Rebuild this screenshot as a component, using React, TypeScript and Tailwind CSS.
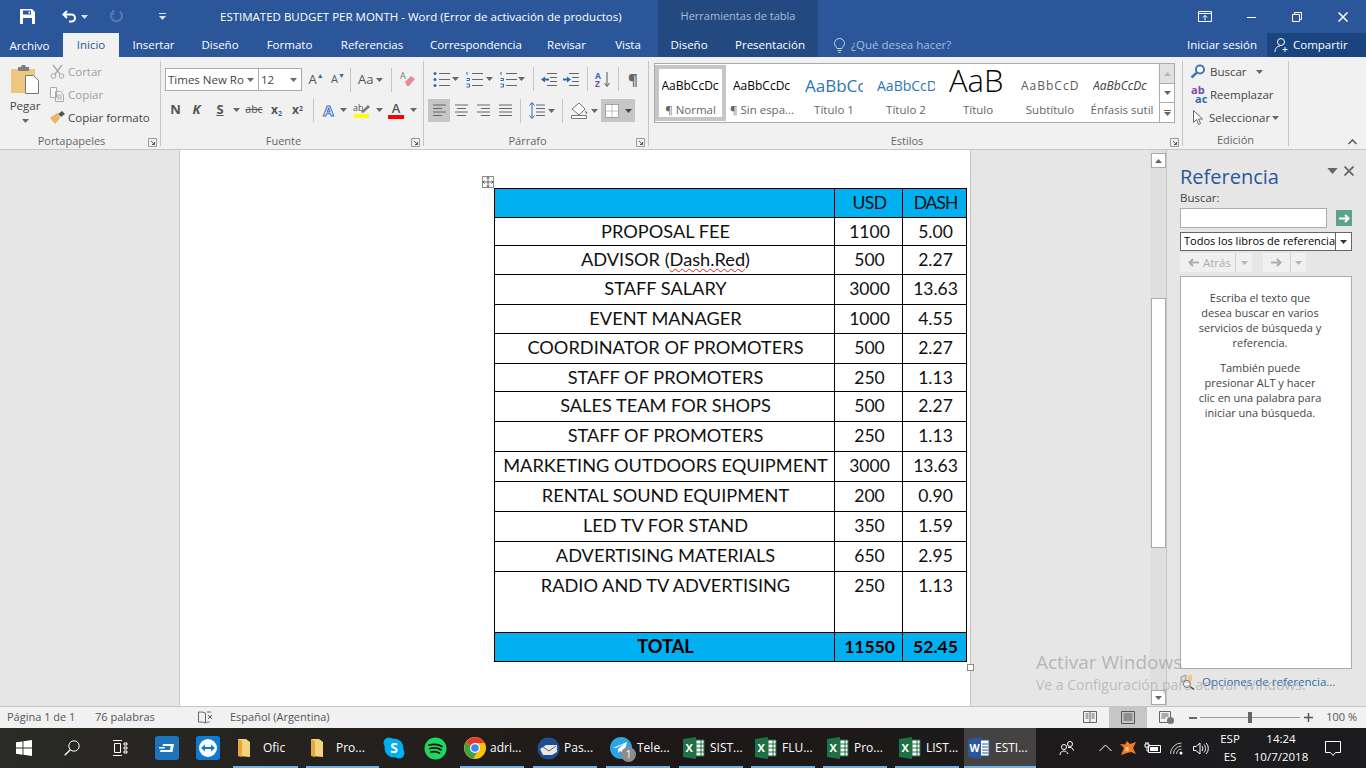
import React from 'react';

const ui = { fontFamily: '"Open Sans", "Noto Sans", sans-serif' };

const Caret = ({ className = 'text-[#666]' }: { className?: string }) => (
  <svg width="7" height="4" viewBox="0 0 7 4" className={`shrink-0 ${className}`}>
    <path d="M0 0h7L3.500 4z" fill="currentColor" />
  </svg>
);

const Launcher = () => (
  <svg width="9" height="9" viewBox="0 0 9 9" className="shrink-0">
    <path d="M.5.500h8v8h-8z" fill="none" stroke="#9a9a9a" />
    <path d="M3 3l3.500 3.500M6.500 4v2.500H4" fill="none" stroke="#555" />
  </svg>
);

const Sep = ({ h = 'h-[24px]' }: { h?: string }) => <div className={`w-px ${h} bg-[#c6c6c6] shrink-0`} />;

const Lines = ({ kind }: { kind: 'left' | 'center' | 'right' | 'justify' }) => {
  const rows =
    kind === 'left'
      ? ['M2 2h13', 'M2 5.500h9', 'M2 9h13', 'M2 12.500h9']
      : kind === 'center'
        ? ['M2 2h13', 'M4 5.500h9', 'M2 9h13', 'M4 12.500h9']
        : kind === 'right'
          ? ['M2 2h13', 'M6 5.500h9', 'M2 9h13', 'M6 12.500h9']
          : ['M2 2h13', 'M2 5.500h13', 'M2 9h13', 'M2 12.500h13'];
  return (
    <svg width="17" height="15" viewBox="0 0 17 15">
      {rows.map((d) => (
        <path key={d} d={d} stroke="#666" strokeWidth="1" fill="none" />
      ))}
    </svg>
  );
};

const BulletIcon = ({ kind }: { kind: 'bullet' | 'number' | 'multi' }) => (
  <svg width="19" height="17" viewBox="0 0 19 17" className="shrink-0">
    <path d="M7 2.500h11M7 8.500h11M7 14.500h11" stroke="#666" fill="none" />
    {kind === 'bullet' && (
      <g fill="#2b6cb0">
        <circle cx="3" cy="2.500" r="1.500" />
        <circle cx="3" cy="8.500" r="1.500" />
        <circle cx="3" cy="14.500" r="1.500" />
      </g>
    )}
    {kind !== 'bullet' && <path d="M2 1v3M1.500 7.500h3v2h-3M1.500 13h3v3h-3" stroke="#2b6cb0" fill="none" />}
  </svg>
);

function QuickBar() {
  return (
    <div className="h-[33px] bg-[#2b579a] flex items-center text-white relative">
      <div className="w-[54px] flex justify-center pl-[1px]">
        <svg width="15" height="15" viewBox="0 0 15 15">
          <path d="M0 0h12l3 3v12H0z" fill="#fff" />
          <path d="M3 1.500h8v4H3zM3 9h9v6H3z" fill="#2b579a" />
          <path d="M8.500 2.500h1.500v2H8.500z" fill="#fff" />
        </svg>
      </div>
      <div className="w-[36px] flex items-center justify-between pl-[8px] pr-[2px]">
        <svg width="16" height="14" viewBox="0 0 16 14">
          <path d="M5 1L1.500 4.500 5 8M2 4.500h7.500a3.500 3.500 0 0 1 3.500 3.500v0a3.500 3.500 0 0 1-3.500 3.500H7" fill="none" stroke="#fff" strokeWidth="2" />
        </svg>
        <Caret className="text-[#dbe4f2]" />
      </div>
      <div className="w-[46px] flex justify-center pl-[7px]">
        <svg width="15" height="15" viewBox="0 0 15 15">
          <path d="M4 2.500a5.500 5.500 0 1 0 7 0M4 1v4H1" fill="none" stroke="#5579ae" strokeWidth="2" />
        </svg>
      </div>
      <div className="w-[44px] flex justify-center pl-[8px]">
        <svg width="7" height="7" viewBox="0 0 7 7">
          <path d="M0 0h7v1H0zM0 3h7L3.500 7z" fill="#dbe4f2" />
        </svg>
      </div>
      <div className="w-[40px]" />
      <div className="text-[11.500px] whitespace-nowrap pt-[1px]">ESTIMATED BUDGET PER MONTH - Word (Error de activación de productos)</div>
      <div className="absolute left-[658px] top-0 w-[160px] h-[33px] bg-[#234a80] flex items-center justify-center text-[11px] text-[#a9bcd8]">
        Herramientas de tabla
      </div>
      <div className="absolute right-0 top-0 h-[33px] flex items-center">
        <div className="w-[46px] flex justify-center">
          <svg width="14" height="11" viewBox="0 0 14 11">
            <path d="M.5.500h13v10H.5zM1 2.500h12M7 9.500V4.500M4.800 6.500 7 4.300l2.200 2.200" fill="none" stroke="#fff" />
          </svg>
        </div>
        <div className="w-[46px] flex justify-center">
          <div className="w-[9px] h-[1px] bg-white mt-[2px] border-b border-white" />
        </div>
        <div className="w-[46px] flex justify-center">
          <svg width="10" height="10" viewBox="0 0 10 10">
            <path d="M.5 2.500h7v7h-7zM2.500 2.500v-2h7v7h-2" fill="none" stroke="#fff" />
          </svg>
        </div>
        <div className="w-[46px] flex justify-center">
          <svg width="10" height="10" viewBox="0 0 10 10">
            <path d="M.5.500l9 9M9.500.500l-9 9" stroke="#fff" strokeWidth="1.500" />
          </svg>
        </div>
      </div>
    </div>
  );
}

const tabs = [
  { label: 'Insertar', w: 'w-[69px]' },
  { label: 'Diseño', w: 'w-[64px]' },
  { label: 'Formato', w: 'w-[75px]' },
  { label: 'Referencias', w: 'w-[90px]' },
  { label: 'Correspondencia', w: 'w-[118px]' },
  { label: 'Revisar', w: 'w-[63px]' },
  { label: 'Vista', w: 'w-[60px]' },
];

function TabBar() {
  return (
    <div className="h-[24px] bg-[#2b579a] flex items-stretch text-[11.500px] text-white">
      <div className="w-[63px] flex items-center justify-center pt-[2px] pr-[4px]">Archivo</div>
      <div className="w-[56px] bg-[#f1f1f1] text-[#2b579a] flex items-center justify-center">Inicio</div>
      {tabs.map((t) => (
        <div key={t.label} className={`${t.w} flex items-center justify-center`}>
          {t.label}
        </div>
      ))}
      <div className="w-[160px] bg-[#234a80] flex items-center">
        <div className="w-[62px] text-center">Diseño</div>
        <div className="w-[98px] text-center pl-[2px]">Presentación</div>
      </div>
      <div className="flex items-center pl-[15px] text-[#a9bcd8]">
        <svg width="13" height="15" viewBox="0 0 13 15" className="mr-[5px]">
          <path d="M4 10.500C3.500 8.500 1.500 8 1.500 5.500a5 5 0 0 1 10 0C11.500 8 9.500 8.500 9 10.500zM4.500 12.500h4M5.500 14.500h2" fill="none" stroke="#c5d2e6" />
        </svg>
        ¿Qué desea hacer?
      </div>
      <div className="flex-1" />
      <div className="flex items-center pr-[10px]">Iniciar sesión</div>
      <div className="w-[99px] bg-[#1a4480] flex items-center pl-[7px] gap-[3px]">
        <svg width="16" height="16" viewBox="0 0 16 16">
          <circle cx="7" cy="5" r="3.500" fill="none" stroke="#fff" />
          <path d="M1 15c0-4 2.500-6 5-6M11 10v5M8.500 12.500h5" fill="none" stroke="#fff" />
        </svg>
        Compartir
      </div>
    </div>
  );
}

function RibbonGroup({ w, label, launcher = true, children }: { w: string; label: string; launcher?: boolean; children: React.ReactNode }) {
  return (
    <div className={`${w} h-[85px] shrink-0 relative border-r border-[#c6c6c6]`}>
      <div className="h-[72px]">{children}</div>
      <div className={`h-[15px] text-[11px] text-[#666] text-center leading-[15px] ${launcher ? 'pr-[17px]' : ''}`}>{label}</div>
      {launcher && (
        <div className="absolute right-[3px] bottom-[-1px]">
          <Launcher />
        </div>
      )}
    </div>
  );
}

function Clipboard() {
  return (
    <div className="flex h-full">
      <div className="w-[50px] flex flex-col items-center pt-[4px] text-[11.500px] text-[#444]">
        <svg width="30" height="30" viewBox="0 0 30 30">
          <path d="M1 4h24v24H1z" fill="#efc780" />
          <path d="M8 2h3l1-2h3l1 2h3v4H8z" fill="#7d7d7d" />
          <path d="M15.500 10.500h8l5 5v13h-13z" fill="#fff" stroke="#777" />
        </svg>
        <div className="mt-[3px] leading-[16px]">Pegar</div>
        <div className="mt-[5px]">
          <Caret />
        </div>
      </div>
      <div className="flex flex-col text-[11.500px] -mt-[1px]">
        <div className="h-[23px] flex items-center text-[#a0a0a0] gap-[3px]">
          <svg width="15" height="15" viewBox="0 0 15 15">
            <path d="M3 1l7 9M12 1L5 10" stroke="#a8a8a8" strokeWidth="1.300" fill="none" />
            <circle cx="3.500" cy="12" r="2.300" fill="none" stroke="#a8a8a8" />
            <circle cx="11.500" cy="12" r="2.300" fill="none" stroke="#a8a8a8" />
          </svg>
          Cortar
        </div>
        <div className="h-[23px] flex items-center text-[#a0a0a0] gap-[3px]">
          <svg width="15" height="15" viewBox="0 0 15 15">
            <path d="M.5.500h6v10h-6zM5.500 4.500h5l3 3v7h-8zM7 8h5M7 10h5M7 12h5" fill="#f8f8f8" stroke="#aaa" />
          </svg>
          Copiar
        </div>
        <div className="h-[23px] flex items-center text-[#444] gap-[3px] whitespace-nowrap">
          <svg width="15" height="14" viewBox="0 0 15 14">
            <path d="M0 7l7-5 3 5-5 6z" fill="#e8b765" />
            <path d="M8 3l4-3 3 3-4 3z" fill="#555" />
          </svg>
          Copiar formato
        </div>
      </div>
    </div>
  );
}

function Font() {
  return (
    <div className="flex flex-col h-full pl-[4px]">
      <div className="h-[30px] flex items-end text-[#444]">
        <div className="w-[94px] h-[23px] bg-white border border-[#ababab] flex items-center justify-between pl-[2px] pr-[4px] text-[11.500px] whitespace-nowrap">
          <span>Times New Ro</span>
          <Caret />
        </div>
        <div className="w-[43px] h-[23px] bg-white border border-l-0 border-[#ababab] flex items-center justify-between pl-[2px] pr-[4px] text-[11.500px]">
          <span>12</span>
          <Caret />
        </div>
        <div className="w-[24px] h-[23px] flex items-center justify-center pl-[4px] text-[13px] text-[#555]">
          A<sup className="text-[#2b6cb0] text-[7px]">▲</sup>
        </div>
        <div className="w-[24px] h-[23px] flex items-center justify-center text-[11px] text-[#555]">
          A<sup className="text-[#2b6cb0] text-[7px]">▼</sup>
        </div>
        <div className="h-[23px] flex items-center pr-[7px]"><Sep /></div>
        <div className="w-[33px] h-[23px] flex items-center gap-[3px] text-[13px] text-[#555]">
          Aa
          <Caret />
        </div>
        <div className="h-[23px] flex items-center pr-[8px]"><Sep /></div>
        <div className="h-[23px] flex items-center">
          <svg width="16" height="17" viewBox="0 0 16 17">
            <text x="0" y="8" fontSize="9" fill="#777" fontFamily="Open Sans">A</text>
            <path d="M5 11l6-6 4 3-6 7H7z" fill="#e88a94" />
          </svg>
        </div>
      </div>
      <div className="h-[30px] flex items-center text-[#555] mt-[4px]">
        <div className="w-[19px] text-center text-[13px] font-bold pl-[2px]">N</div>
        <div className="w-[25px] text-center text-[13px] font-bold italic">K</div>
        <div className="w-[22px] text-center text-[13px] font-bold underline">S</div>
        <div className="w-[8px] ml-[1px] flex justify-center"><Caret /></div>
        <div className="w-[28px] text-center text-[10.500px] line-through">abc</div>
        <div className="w-[17px] text-center text-[12px] font-bold">
          x<sub className="text-[#2b6cb0] text-[7px]">2</sub>
        </div>
        <div className="w-[21px] ml-[2px] text-center text-[12px] font-bold">
          x<sup className="text-[7px]">2</sup>
        </div>
        <div className="px-[5px] flex items-center"><Sep /></div>
        <div className="w-[19px] text-center text-[15px] text-white font-bold [-webkit-text-stroke:1px_#3573b8]">A</div>
        <div className="w-[10px] flex justify-center"><Caret /></div>
        <div className="w-[26px] flex justify-center ml-[1px]">
          <svg width="18" height="16" viewBox="0 0 18 16">
            <text x="0" y="9" fontSize="9" fill="#555" fontFamily="Open Sans">ab</text>
            <path d="M8 10l7-7 2 2-7 6z" fill="#777" />
            <path d="M1 12h15v4H1z" fill="#ffff00" />
          </svg>
        </div>
        <div className="w-[8px] flex justify-center"><Caret /></div>
        <div className="w-[26px] flex flex-col items-center">
          <span className="text-[13px] leading-[13px] font-semibold">A</span>
          <span className="w-[16px] h-[4px] bg-[#ff0000]" />
        </div>
        <div className="w-[8px] flex justify-center"><Caret /></div>
      </div>
    </div>
  );
}

function Paragraph() {
  return (
    <div className="flex flex-col h-full pl-[6px]">
      <div className="h-[30px] flex items-end pb-[2px]">
        <div className="h-[20px] flex items-center w-[22px] pl-[2px]"><BulletIcon kind="bullet" /></div>
        <div className="h-[20px] flex items-center w-[8px]"><Caret /></div>
        <div className="h-[20px] flex items-center w-[26px] pl-[5px]"><BulletIcon kind="number" /></div>
        <div className="h-[20px] flex items-center w-[8px]"><Caret /></div>
        <div className="h-[20px] flex items-center w-[24px] pl-[5px]"><BulletIcon kind="multi" /></div>
        <div className="h-[20px] flex items-center w-[8px]"><Caret /></div>
        <div className="h-[20px] flex items-center px-[7px]"><Sep /></div>
        <div className="h-[20px] flex items-center gap-[5px]">
          <svg width="17" height="13" viewBox="0 0 17 13">
            <path d="M6 .500h10M9 4.500h7M9 8.500h7M6 12.500h10" stroke="#666" fill="none" />
            <path d="M0 6.500l4-3v2h4v2H4v2z" fill="#2b6cb0" />
          </svg>
          <svg width="17" height="13" viewBox="0 0 17 13">
            <path d="M6 .500h10M9 4.500h7M9 8.500h7M6 12.500h10" stroke="#666" fill="none" />
            <path d="M8 6.500l-4-3v2H0v2h4v2z" fill="#2b6cb0" />
          </svg>
        </div>
        <div className="h-[20px] flex items-center px-[7px]"><Sep /></div>
        <div className="h-[20px] flex items-center">
          <svg width="16" height="17" viewBox="0 0 16 17">
            <text x="0" y="8" fontSize="8.500" fontWeight="700" fill="#2b6cb0" fontFamily="Open Sans">A</text>
            <text x="0" y="16" fontSize="8.500" fontWeight="700" fill="#7b4fa3" fontFamily="Open Sans">Z</text>
            <path d="M12 1v14M9.500 12l2.500 3.500 2.500-3.500" stroke="#555" fill="none" />
          </svg>
        </div>
        <div className="h-[20px] flex items-center px-[7px]"><Sep /></div>
        <div className="h-[20px] w-[14px] flex items-center justify-center text-[15px] font-bold text-[#666]">¶</div>
      </div>
      <div className="h-[23px] flex items-center mt-[8px] -ml-[2px]">
        <div className="w-[22px] h-[23px] bg-[#c6c6c6] flex items-center justify-center"><Lines kind="left" /></div>
        <div className="w-[22px] flex justify-center"><Lines kind="center" /></div>
        <div className="w-[22px] flex justify-center"><Lines kind="right" /></div>
        <div className="w-[22px] flex justify-center"><Lines kind="justify" /></div>
        <div className="px-[4px] flex items-center"><Sep /></div>
        <div className="flex items-center gap-[3px] w-[29px] ml-[4px]">
          <svg width="16" height="17" viewBox="0 0 16 17" className="shrink-0">
            <path d="M3 1v15M.5 3.500L3 .500l2.500 3M.5 13.500L3 16.500l2.500-3" stroke="#2b6cb0" fill="none" />
            <path d="M7 3h9M7 6.500h9M7 10h9M7 13.500h9" stroke="#666" fill="none" />
          </svg>
          <Caret />
        </div>
        <div className="px-[4px] flex items-center"><Sep /></div>
        <div className="flex items-center gap-[1px] w-[28px] ml-[3px]">
          <svg width="20" height="17" viewBox="0 0 20 17" className="shrink-0">
            <path d="M2 7l7-6 6 6-6 6z" fill="#fff" stroke="#777" />
            <path d="M15 8l2.500 3-1.500 1z" fill="#2b6cb0" />
            <path d="M1.500 13.500h15v3h-15z" fill="#fff" stroke="#777" />
          </svg>
          <Caret />
        </div>
        <div className="w-[34px] h-[23px] bg-[#c6c6c6] flex items-center justify-center gap-[6px] ml-[3px]">
          <svg width="14" height="14" viewBox="0 0 14 14">
            <path d="M.5.500h13v13H.5z" fill="#fff" stroke="#666" strokeDasharray="1 1" />
            <path d="M7 .500v13M.5 7h13" fill="none" stroke="#888" strokeDasharray="1 1" />
          </svg>
          <Caret className="text-[#444]" />
        </div>
      </div>
    </div>
  );
}

const styles = [
  { name: '¶ Normal', w: 'w-[71px]', sample: 'AaBbCcDc', cls: 'text-[12px] text-black', active: true },
  { name: '¶ Sin espa...', w: 'w-[72px]', sample: 'AaBbCcDc', cls: 'text-[12px] text-black' },
  { name: 'Título 1', w: 'w-[72px]', sample: 'AaBbCc', cls: 'text-[17px] text-[#2e74b5]' },
  { name: 'Título 2', w: 'w-[72px]', sample: 'AaBbCcD', cls: 'text-[14px] text-[#2e74b5]' },
  { name: 'Título', w: 'w-[72px]', sample: 'AaB', cls: 'text-[31px] font-light text-black leading-[26px] pb-[12px]' },
  { name: 'Subtítulo', w: 'w-[72px]', sample: 'AaBbCcD', cls: 'text-[12px] text-[#5a5a5a] tracking-[1px]' },
  { name: 'Énfasis sutil', w: 'w-[72px]', sample: 'AaBbCcDc', cls: 'text-[12px] italic text-[#404040]' },
];

function Styles() {
  return (
    <div className="flex pl-[5px] pt-[2px]">
      <div className="w-[521px] h-[60px] bg-white border border-[#ababab] flex">
        <div className="flex-1 flex min-w-0">
          {styles.map((s) => (
            <div
              key={s.name}
              className={`${s.w} shrink-0 h-[56px] mt-[1px] flex flex-col items-center overflow-hidden border-[4px] ${s.active ? 'border-[#c6c6c6]' : 'border-white'}`}
            >
              <div className={`h-[33px] shrink-0 w-[64px] flex items-center justify-center overflow-hidden whitespace-nowrap ${s.cls}`}>
                <span className="inline-block w-[58px] overflow-hidden text-clip">{s.sample}</span>
              </div>
              <div className="text-[11.500px] text-[#666] leading-[15px] whitespace-nowrap">{s.name}</div>
            </div>
          ))}
        </div>
        <div className="w-[15px] shrink-0 border-l border-[#ababab] flex flex-col">
          <div className="h-[20px] bg-[#e1e1e1] border-b border-[#ababab] flex items-center justify-center">
            <Caret className="text-[#b5b5b5] rotate-180" />
          </div>
          <div className="h-[19px] border-b border-[#ababab] flex items-center justify-center">
            <Caret />
          </div>
          <div className="flex-1 flex flex-col items-center justify-center gap-[1px]">
            <div className="w-[7px] h-px bg-[#666]" />
            <Caret />
          </div>
        </div>
      </div>
    </div>
  );
}

function Editing() {
  return (
    <div className="flex flex-col pl-[7px] text-[11.500px] text-[#444] -mt-[1px]">
      <div className="h-[23px] flex items-center gap-[4px]">
        <svg width="16" height="15" viewBox="0 0 16 15">
          <circle cx="10" cy="5.500" r="4" fill="#fff" stroke="#3f78b5" strokeWidth="2" />
          <path d="M7 8.500L1.500 13.500" stroke="#3f78b5" strokeWidth="2.500" />
        </svg>
        Buscar
        <Caret className="text-[#666] ml-[5px]" />
      </div>
      <div className="h-[23px] flex items-center gap-[3px]">
        <div className="w-[17px] h-[19px] text-[11px] leading-[9px] font-bold">
          <div className="text-[#7b4fa3] pl-[1px]">ab</div>
          <div className="text-[#2b6cb0] pl-[5px]">ac</div>
        </div>
        Reemplazar
      </div>
      <div className="h-[23px] flex items-center gap-[5px] pl-[3px]">
        <svg width="11" height="16" viewBox="0 0 11 16">
          <path d="M.5.500v12l3-3 2 5 2-1-2-4.500h4z" fill="#fff" stroke="#666" />
        </svg>
        <span className="flex items-center gap-[2px]">
          Seleccionar
          <Caret />
        </span>
      </div>
    </div>
  );
}

function Ribbon() {
  return (
    <div className="h-[93px] bg-[#f1f1f1] border-b border-[#c6c6c6] flex pt-[4px] relative" style={ui}>
      <RibbonGroup w="w-[161px]" label="Portapapeles">
        <Clipboard />
      </RibbonGroup>
      <RibbonGroup w="w-[263px]" label="Fuente">
        <Font />
      </RibbonGroup>
      <RibbonGroup w="w-[225px]" label="Párrafo">
        <Paragraph />
      </RibbonGroup>
      <RibbonGroup w="w-[534px]" label="Estilos">
        <Styles />
      </RibbonGroup>
      <RibbonGroup w="w-[106px]" label="Edición" launcher={false}>
        <Editing />
      </RibbonGroup>
      <div className="absolute right-[9px] bottom-[4px]">
        <svg width="9" height="6" viewBox="0 0 9 6">
          <path d="M.5 5l4-4 4 4" fill="none" stroke="#555" strokeWidth="1.500" />
        </svg>
      </div>
    </div>
  );
}

const rows: { name: string; usd: string; dash: string; h: string; squiggle?: boolean }[] = [
  { name: 'PROPOSAL FEE', usd: '1100', dash: '5.00', h: 'h-[28px]' },
  { name: 'ADVISOR (Dash.Red)', usd: '500', dash: '2.27', h: 'h-[29px]', squiggle: true },
  { name: 'STAFF SALARY', usd: '3000', dash: '13.63', h: 'h-[30px]' },
  { name: 'EVENT MANAGER', usd: '1000', dash: '4.55', h: 'h-[29px]' },
  { name: 'COORDINATOR OF PROMOTERS', usd: '500', dash: '2.27', h: 'h-[30px]' },
  { name: 'STAFF OF PROMOTERS', usd: '250', dash: '1.13', h: 'h-[28px]' },
  { name: 'SALES TEAM FOR SHOPS', usd: '500', dash: '2.27', h: 'h-[30px]' },
  { name: 'STAFF OF PROMOTERS', usd: '250', dash: '1.13', h: 'h-[30px]' },
  { name: 'MARKETING OUTDOORS EQUIPMENT', usd: '3000', dash: '13.63', h: 'h-[30px]' },
  { name: 'RENTAL SOUND EQUIPMENT', usd: '200', dash: '0.90', h: 'h-[30px]' },
  { name: 'LED TV FOR STAND', usd: '350', dash: '1.59', h: 'h-[30px]' },
  { name: 'ADVERTISING MATERIALS', usd: '650', dash: '2.95', h: 'h-[30px]' },
  { name: 'RADIO AND TV ADVERTISING', usd: '250', dash: '1.13', h: 'h-[61px]' },
];

const td = 'border border-black p-0 pl-[2px] align-top text-center leading-[27px] whitespace-nowrap';

function BudgetTable() {
  return (
    <div className="relative w-[472px]">
      <div className="absolute -left-[12px] -top-[12px] w-[12px] h-[12px] border border-[#8a8a8a] bg-white flex items-center justify-center">
        <svg width="10" height="10" viewBox="0 0 10 10">
          <path d="M5 0v10M0 5h10M3.500 1.500L5 0l1.500 1.500M3.500 8.500L5 10l1.500-1.500M1.500 3.500L0 5l1.500 1.500M8.500 3.500L10 5 8.500 6.500" fill="none" stroke="#444" strokeWidth=".8" />
        </svg>
      </div>
      <table className="border-collapse table-fixed w-[472px] text-[17.500px] text-[#111]" style={{ fontFamily: 'Lato, sans-serif' }}>
        <colgroup>
          <col className="w-[340px]" />
          <col className="w-[68px]" />
          <col className="w-[64px]" />
        </colgroup>
        <tbody>
          <tr className="h-[29px] bg-[#00b0f0]">
            <td className={td} />
            <td className={`${td} tracking-[-0.5px]`}>USD</td>
            <td className={`${td} tracking-[-1px]`}>DASH</td>
          </tr>
          {rows.map((r, i) => (
            <tr key={i} className={r.h}>
              <td className={`${td} text-[18.200px]`}>
                {r.squiggle ? (
                  <>
                    ADVISOR (<span className="underline decoration-wavy decoration-[#e02020] decoration-1 underline-offset-2">Dash.Red</span>)
                  </>
                ) : (
                  r.name
                )}
              </td>
              <td className={td}>{r.usd}</td>
              <td className={td}>{r.dash}</td>
            </tr>
          ))}
          <tr className="h-[29px] bg-[#00b0f0] font-bold text-black">
            <td className={`${td} text-[18.200px]`}>TOTAL</td>
            <td className={td}>11550</td>
            <td className={td}>52.45</td>
          </tr>
        </tbody>
      </table>
      <div className="absolute -right-[8px] -bottom-[9px] w-[7px] h-[7px] border border-[#8a8a8a] bg-white" />
    </div>
  );
}

function ReferencePane() {
  return (
    <div className="w-[200px] shrink-0 bg-[#e6e6e6] border-l border-[#c6c6c6] flex flex-col pl-[13px] pr-[14px] text-[#444]" style={ui}>
      <div className="h-[41px] flex items-end justify-between">
        <span className="text-[20px] leading-[28px] text-[#2b579a]">Referencia</span>
        <span className="flex items-center gap-[6px] mb-[15px] -mr-[2px]">
          <Caret className="text-[#666] scale-150" />
          <svg width="10" height="10" viewBox="0 0 10 10" className="ml-[2px]">
            <path d="M.5.500l9 9M9.500.500l-9 9" stroke="#666" strokeWidth="1.800" />
          </svg>
        </span>
      </div>
      <div className="text-[11.500px] leading-[16px] mt-[-1px]">Buscar:</div>
      <div className="flex items-center justify-between mt-[2px]">
        <div className="w-[147px] h-[20px] bg-white border border-[#ababab]" />
        <div className="w-[16px] h-[16px] bg-[#5da38a] flex items-center justify-center">
          <svg width="11" height="9" viewBox="0 0 11 9">
            <path d="M0 4.500h9M6 1l3.500 3.500L6 8" fill="none" stroke="#fff" strokeWidth="2" />
          </svg>
        </div>
      </div>
      <div className="h-[19px] mt-[4px] bg-white border border-[#666] flex items-center text-[11px] text-black">
        <span className="flex-1 pl-[3px] whitespace-nowrap overflow-hidden">Todos los libros de referencia</span>
        <span className="w-[16px] h-full border-l border-[#666] flex items-center justify-center">
          <Caret className="text-[#333]" />
        </span>
      </div>
      <div className="flex mt-[2px] gap-[11px] text-[11.500px] text-[#adadad]">
        <div className="w-[72px] h-[19px] bg-[#f0f0f0] flex items-center pl-[8px] gap-[4px]">
          <svg width="11" height="9" viewBox="0 0 11 9">
            <path d="M11 4.500H2M5 1L1.500 4.500 5 8" fill="none" stroke="#adadad" strokeWidth="2" />
          </svg>
          Atrás
          <span className="ml-auto w-[17px] h-full border-l border-[#d0d0d0] flex items-center justify-center">
            <Caret className="text-[#b5b5b5]" />
          </span>
        </div>
        <div className="w-[43px] h-[19px] bg-[#f0f0f0] flex items-center pl-[8px]">
          <svg width="11" height="9" viewBox="0 0 11 9">
            <path d="M0 4.500h9M6 1l3.500 3.500L6 8" fill="none" stroke="#adadad" strokeWidth="2" />
          </svg>
          <span className="ml-auto w-[16px] h-full border-l border-[#d0d0d0] flex items-center justify-center">
            <Caret className="text-[#b5b5b5]" />
          </span>
        </div>
      </div>
      <div className="mt-[4px] h-[393px] bg-white border border-[#ababab] text-[11px] leading-[15px] text-center text-[#444] pl-[16px] pr-[28px] pt-[13px]">
        <p>Escriba el texto que desea buscar en varios servicios de búsqueda y referencia.</p>
        <p className="mt-[10px]">También puede presionar ALT y hacer clic en una palabra para iniciar una búsqueda.</p>
      </div>
      <div className="flex items-center mt-[4px] gap-[6px] text-[11.500px] text-[#2b6cb0] whitespace-nowrap">
        <svg width="16" height="16" viewBox="0 0 16 16">
          <path d="M1 8V3l5-2v5z" fill="#d8d8d8" stroke="#999" />
          <path d="M8 1h4v6H8z" fill="#f2c77e" />
          <circle cx="7" cy="10" r="3.500" fill="#fff" stroke="#666" />
          <path d="M10 12.500l4 3" stroke="#444" strokeWidth="1.500" />
        </svg>
        Opciones de referencia...
      </div>
    </div>
  );
}

function DocArea() {
  return (
    <div className="h-[556px] flex bg-[#e6e6e6] relative overflow-hidden">
      <div className="w-[179px] shrink-0" />
      <div className="w-[792px] shrink-0 bg-white border-x border-[#c6c6c6] pl-[314px] pt-[38px]">
        <BudgetTable />
      </div>
      <div className="w-[179px] shrink-0" />
      <div className="w-[16px] shrink-0 bg-[#dfdfdf] flex flex-col items-center">
        <div className="w-[15px] h-[15px] mt-[3px] bg-white border border-[#ababab] flex items-center justify-center">
          <Caret className="text-[#666] rotate-180" />
        </div>
        <div className="w-[15px] h-[250px] mt-[130px] bg-white border border-[#ababab]" />
        <div className="flex-1" />
        <div className="w-[15px] h-[15px] mb-[1px] bg-white border border-[#ababab] flex items-center justify-center">
          <Caret className="text-[#666]" />
        </div>
      </div>
      <ReferencePane />
      <div className="absolute left-[1036px] top-[500px] text-[#a9a9a9]/80 pointer-events-none whitespace-nowrap" style={ui}>
        <div className="text-[19px] leading-[24px]">Activar Windows</div>
        <div className="text-[14px] leading-[22px] text-[#a9a9a9]/70">Ve a Configuración para activar Windows.</div>
      </div>
    </div>
  );
}

function StatusBar() {
  return (
    <div className="h-[22px] bg-[#f1f1f1] border-t border-[#c6c6c6] flex items-center text-[11px] text-[#555]" style={ui}>
      <span className="pl-[7px] w-[95px]">Página 1 de 1</span>
      <span className="w-[103px]">76 palabras</span>
      <svg width="15" height="13" viewBox="0 0 15 13">
        <path d="M7.500 2C6 1 3 1 .5 1v10c2.500 0 5.500 0 7 1 1.500-1 3-1 4-1M7.500 2v10M9 1h4" fill="none" stroke="#666" />
        <path d="M10 4l4 4M14 4l-4 4" stroke="#555" />
      </svg>
      <span className="pl-[17px]">Español (Argentina)</span>
      <div className="flex-1" />
      <div className="w-[38px] flex justify-center">
        <svg width="14" height="13" viewBox="0 0 14 13">
          <path d="M.5.500h13v11H.5zM7 .500v11M2.500 3h3M2.500 5h3M2.500 7h3M8.500 3h3M8.500 5h3M8.500 7h3" fill="none" stroke="#666" />
        </svg>
      </div>
      <div className="w-[38px] h-full bg-[#c6c6c6] flex justify-center items-center">
        <svg width="14" height="13" viewBox="0 0 14 13">
          <path d="M.5.500h13v12H.5zM2.500 3h9M2.500 5h9M2.500 7h9M2.500 9h9" fill="none" stroke="#555" />
        </svg>
      </div>
      <div className="w-[38px] flex justify-center">
        <svg width="15" height="13" viewBox="0 0 15 13">
          <path d="M.5.500h11v11H.5zM2.500 3h7M2.500 5h7M2.500 7h4" fill="none" stroke="#666" />
          <circle cx="11.500" cy="9.500" r="3.500" fill="#777" />
        </svg>
      </div>
      <div className="w-[4px]" />
      <div className="w-[8px] h-[2px] bg-[#666]" />
      <div className="w-[100px] ml-[3px] mr-[4px] h-px bg-[#999] relative">
        <div className="absolute left-[48px] -top-[5px] w-[4px] h-[11px] bg-[#666]" />
      </div>
      <svg width="9" height="9" viewBox="0 0 9 9">
        <path d="M4.500 0v9M0 4.500h9" stroke="#555" strokeWidth="1.500" />
      </svg>
      <span className="w-[53px] text-right pr-[9px] text-[#555]">100 %</span>
    </div>
  );
}

const Folder = () => (
  <svg width="16" height="20" viewBox="0 0 16 20">
    <path d="M1 1h8l4 3v15l-12-1z" fill="#f5d27c" />
    <path d="M1 1l4 2v16l-4-1z" fill="#e3a93c" />
  </svg>
);

const Excel = () => (
  <svg width="22" height="22" viewBox="0 0 22 22">
    <path d="M10 3h11v16H10z" fill="#fff" stroke="#1e7145" />
    <path d="M13 3v16M18 3v16M13 7h8M13 11h8M13 15h8" stroke="#1e7145" fill="none" />
    <path d="M0 2l13-2v22L0 20z" fill="#1e7145" />
    <text x="2.500" y="15" fontSize="11" fontWeight="700" fill="#fff" fontFamily="Open Sans">X</text>
  </svg>
);

type Task = { icon: React.ReactNode; label?: string; w: string; line?: string; active?: boolean; gap?: string };

const tasks: Task[] = [
  { w: 'w-[41px]', icon: (
    <div className="w-[24px] h-[24px] bg-[#1c75bc] rounded-[3px] flex items-center justify-center">
      <svg width="16" height="8" viewBox="0 0 16 8"><path d="M4 0h11l-1.500 8H1l.5-2h9.500l.7-4H3.500zM0 3h6l-.4 1.500h-6z" fill="#fff" /></svg>
    </div>
  ) },
  { w: 'w-[41px]', icon: (
    <div className="w-[24px] h-[24px] bg-[#0e7ad4] rounded-[3px] flex items-center justify-center">
      <svg width="20" height="20" viewBox="0 0 20 20"><circle cx="10" cy="10" r="9" fill="#fff" /><path d="M3 10l4-3.500V9h6V6.500l4 3.500-4 3.500V11H7v2.500z" fill="#0e7ad4" /></svg>
    </div>
  ) },
  { w: 'w-[73px]', line: 'right-[8px]', label: 'Ofic', icon: <Folder />, gap: 'gap-[10px]' },
  { w: 'w-[73px]', line: 'right-0', label: 'Pro...', icon: <Folder />, gap: 'gap-[10px]' },
  { w: 'w-[41px]', icon: (
    <svg width="22" height="22" viewBox="0 0 22 22">
      <circle cx="6" cy="6" r="5.500" fill="#00aff0" />
      <circle cx="16" cy="16" r="5.500" fill="#00aff0" />
      <circle cx="11" cy="11" r="9.500" fill="#00aff0" />
      <text x="11" y="16" textAnchor="middle" fontSize="14" fontWeight="700" fill="#fff" fontFamily="Open Sans">S</text>
    </svg>
  ) },
  { w: 'w-[40px]', icon: (
    <svg width="23" height="23" viewBox="0 0 23 23">
      <circle cx="11.500" cy="11.500" r="11" fill="#1ed760" />
      <path d="M5 8c4-1 9-1 13 1.500M6 11.500c3.500-1 8-.8 11 1.200M7 15c3-.7 6-.5 8.500 1" fill="none" stroke="#111" strokeWidth="1.800" strokeLinecap="round" />
    </svg>
  ) },
  { w: 'w-[73px]', line: 'right-[9px]', label: 'adri...', gap: 'gap-[4px]', icon: (
    <svg width="22" height="22" viewBox="0 0 22 22">
      <circle cx="11" cy="11" r="11" fill="#ffc107" />
      <path d="M11 11L2 5.500A11 11 0 0 1 21 6H11z" fill="#e53935" />
      <path d="M11 11L2 5.500A11 11 0 0 0 9 22l5-8z" fill="#43a047" />
      <circle cx="11" cy="11" r="5" fill="#fff" />
      <circle cx="11" cy="11" r="3.800" fill="#4285f4" />
    </svg>
  ) },
  { w: 'w-[73px]', line: 'right-[9px]', label: 'Pas...', gap: 'gap-[4px]', icon: (
    <svg width="23" height="23" viewBox="0 0 23 23">
      <circle cx="11.500" cy="11.500" r="11" fill="#1f4f8f" />
      <path d="M3 12l6-4h11v7l-5 3H6z" fill="#e7e7e7" />
      <path d="M6 10l6 4 7-5" fill="none" stroke="#666" />
    </svg>
  ) },
  { w: 'w-[73px]', line: 'right-[9px]', label: 'Tele...', gap: 'gap-[5px]', icon: (
    <div className="relative w-[22px] h-[22px]">
      <svg width="22" height="22" viewBox="0 0 22 22">
        <circle cx="11" cy="11" r="11" fill="#2ca5e0" />
        <path d="M3 11l14-6-3 12-4-3-2 2v-4l6-5-8 4z" fill="#fff" />
      </svg>
      <div className="absolute -right-[4px] -bottom-[3px] w-[15px] h-[15px] rounded-full bg-[#8c8c8c] text-[10px] leading-[15px] text-center text-white">1</div>
    </div>
  ) },
  { w: 'w-[72px]', line: 'right-[8px]', label: 'SIST...', icon: <Excel />, gap: 'gap-[5px]' },
  { w: 'w-[72px]', line: 'right-[8px]', label: 'FLU...', icon: <Excel />, gap: 'gap-[5px]' },
  { w: 'w-[72px]', line: 'right-[8px]', label: 'Pro...', icon: <Excel />, gap: 'gap-[5px]' },
  { w: 'w-[69px]', line: 'right-[5px]', label: 'LIST...', icon: <Excel />, gap: 'gap-[5px]' },
  { w: 'w-[72px]', line: 'right-0', active: true, label: 'ESTI...', gap: 'gap-[5px]', icon: (
    <svg width="22" height="22" viewBox="0 0 22 22">
      <path d="M10 3h11v16H10z" fill="#fff" stroke="#2b579a" />
      <path d="M14 7h6M14 10h6M14 13h6M14 16h6" stroke="#2b579a" />
      <path d="M0 2l13-2v22L0 20z" fill="#2b579a" />
      <text x="1.500" y="15" fontSize="10.500" fontWeight="700" fill="#fff" fontFamily="Open Sans">W</text>
    </svg>
  ) },
];

function Taskbar() {
  return (
    <div className="h-[40px] bg-gradient-to-r from-[#2a2a26] via-[#1d1817] to-[#1c1c1f] flex items-stretch text-white text-[12px]" style={ui}>
      <div className="w-[48px] flex items-center justify-center">
        <svg width="16" height="16" viewBox="0 0 16 16">
          <path d="M0 2.300l6.500-.9v6.200H0zM7.400 1.300L16 0v7.600H7.400zM0 8.500h6.500v6.200L0 13.800zM7.400 8.500H16V16l-8.600-1.200z" fill="#fff" />
        </svg>
      </div>
      <div className="w-[48px] flex items-center justify-center">
        <svg width="16" height="16" viewBox="0 0 16 16">
          <circle cx="10" cy="6" r="5.200" fill="none" stroke="#fff" />
          <path d="M6.300 9.700L.7 15.300" stroke="#fff" strokeWidth="1.300" />
        </svg>
      </div>
      <div className="w-[48px] flex items-center justify-center">
        <svg width="16" height="16" viewBox="0 0 16 16">
          <path d="M1 .500h9M1 15.500h9M2.500 3.500h6v9h-6zM12 3h3v2h-3zM12 7h3v2h-3zM12 11h3v2h-3z" fill="none" stroke="#fff" />
        </svg>
      </div>
      <div className="w-[7px]" />
      {tasks.map((t, i) => (
        <div key={i} className={`${t.w} relative flex items-center pl-[4px] ${t.gap ?? ''} ${t.active ? 'bg-[#454341]' : ''}`}>
          {t.icon}
          {t.label && <span className="whitespace-nowrap">{t.label}</span>}
          {t.line && <div className={`absolute bottom-0 left-0 ${t.line} h-[2px] bg-[#6fb1e8]`} />}
        </div>
      ))}
      <div className="flex-1" />
      <div className="flex items-center w-[330px] shrink-0">
        <div className="w-[62px] flex justify-center">
          <svg width="16" height="16" viewBox="0 0 16 16">
            <circle cx="5" cy="7" r="2.500" fill="none" stroke="#fff" />
            <circle cx="11" cy="4" r="2.500" fill="none" stroke="#fff" />
            <path d="M1 15c0-3 2-4 4-4s3 1 4 3M9 7.500c3-.5 5 .5 5.500 3" fill="none" stroke="#fff" />
          </svg>
        </div>
        <div className="w-[14px] flex justify-center">
          <svg width="13" height="8" viewBox="0 0 13 8" className="shrink-0">
            <path d="M.5 7l6-6 6 6" fill="none" stroke="#fff" />
          </svg>
        </div>
        <div className="w-[32px] flex justify-center">
          <svg width="16" height="15" viewBox="0 0 16 15">
            <path d="M1 14L4 7 0 3l5 .500L7 0l3 3 6-2-3 6 3 6-5-2-4 1z" fill="#f27c1f" />
            <text x="5" y="10" fontSize="7" fill="#fff" fontFamily="Open Sans">a</text>
          </svg>
        </div>
        <div className="w-[17px] flex justify-center">
          <svg width="17" height="12" viewBox="0 0 17 12" className="shrink-0">
            <path d="M4.500 3.500h12v7h-12zM2 0v2M4 0v2M1 2h4v3H1zM3 5v4h2" fill="none" stroke="#fff" />
            <path d="M6 5h8v4H6z" fill="#fff" />
          </svg>
        </div>
        <div className="w-[32px] flex justify-center">
          <svg width="15" height="13" viewBox="0 0 15 13">
            <path d="M.5 12A11 11 0 0 1 11.500 1M3.500 12a8 8 0 0 1 8-8M6.500 12a5 5 0 0 1 5-5" fill="none" stroke="#ccc" />
            <circle cx="11" cy="11" r="1.500" fill="#fff" />
          </svg>
        </div>
        <div className="w-[16px] flex justify-center">
          <svg width="16" height="13" viewBox="0 0 16 13" className="shrink-0">
            <path d="M.5 4.500h2.500L7 1v11L3 8.500H.5zM9 4c1 1 1 4 0 5M11 2.500c2 2 2 6 0 8M13 1c3 3 3 8 0 11" fill="none" stroke="#fff" />
          </svg>
        </div>
        <div className="w-[42px] text-center leading-[18px] text-[11.500px]">
          <div>ESP</div>
          <div>ES</div>
        </div>
        <div className="w-[60px] text-center leading-[18px] text-[11.500px]">
          <div>14:24</div>
          <div>10/7/2018</div>
        </div>
        <div className="w-[44px] flex justify-center">
          <svg width="16" height="15" viewBox="0 0 16 15">
            <path d="M.5.500h15v11h-5l-2.500 3-2.500-3h-5z" fill="none" stroke="#fff" />
          </svg>
        </div>
      </div>
    </div>
  );
}

export default function App() {
  return (
    <div className="w-[1366px] h-[768px] overflow-hidden flex flex-col" style={ui}>
      <QuickBar />
      <TabBar />
      <Ribbon />
      <DocArea />
      <StatusBar />
      <Taskbar />
    </div>
  );
}
